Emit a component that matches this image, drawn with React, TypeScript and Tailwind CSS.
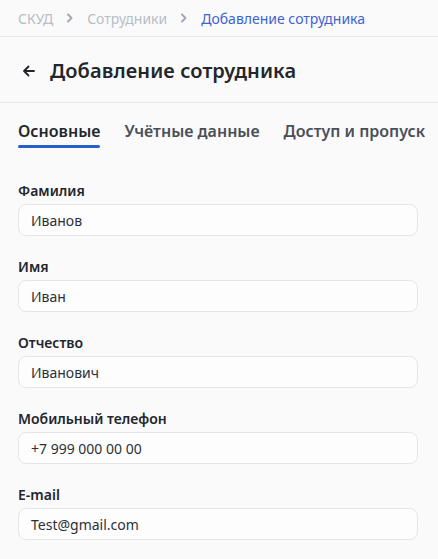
import React from 'react';

const fields = [
  { label: 'Фамилия', value: 'Иванов' },
  { label: 'Имя', value: 'Иван' },
  { label: 'Отчество', value: 'Иванович' },
  { label: 'Мобильный телефон', value: '+7 999 000 00 00' },
  { label: 'E-mail', value: 'Test@gmail.com' },
];

function Chevron() {
  return (
    <svg width="8" height="10" viewBox="0 0 8 10" fill="none" className="text-[#a3a8b0]">
      <path d="M2 1.5 5.5 5 2 8.5" stroke="currentColor" strokeWidth="2" strokeLinecap="round" strokeLinejoin="round" />
    </svg>
  );
}

export default function App() {
  return (
    <div className="min-h-screen bg-[#fafafb] text-[#23262b]" style={{ fontFamily: '"Noto Sans", "Open Sans", sans-serif' }}>
      {/* breadcrumbs */}
      <div className="flex items-center h-[37px] px-[18px] gap-[13px] text-[14px] border-b border-[#e6e7ea]">
        <span className="text-[#b9bdc4]">СКУД</span>
        <Chevron />
        <span className="text-[#b9bdc4]">Сотрудники</span>
        <Chevron />
        <span className="text-[#3f63d2]">Добавление сотрудника</span>
      </div>

      {/* header */}
      <div className="flex items-center h-[66px] pt-[2px] px-[22px] gap-[14px] border-b border-[#e6e7ea]">
        <svg width="14" height="14" viewBox="0 0 14 14" fill="none">
          <path d="M12 7H2.5M6.5 2.5 2 7l4.5 4.5" stroke="#23262b" strokeWidth="1.8" strokeLinecap="round" strokeLinejoin="round" />
        </svg>
        <h1 className="text-[20px] font-semibold tracking-[0.1px]">Добавление сотрудника</h1>
      </div>

      {/* tabs */}
      <div className="flex gap-[24px] px-[18px] pt-[16px] whitespace-nowrap">
        <div className="flex flex-col shrink-0">
          <span className="text-[16px] font-semibold leading-[24px] text-[#23262b]">Основные</span>
          <span className="mt-[2px] h-[3px] rounded-full bg-[#2a5fcb]" />
        </div>
        <span className="shrink-0 text-[16px] font-semibold leading-[24px] text-[#4a4f57]">Учётные данные</span>
        <span className="shrink-0 text-[16px] font-semibold leading-[24px] text-[#4a4f57]">Доступ и пропуск</span>
      </div>

      {/* form */}
      <div className="flex flex-col gap-[21px] px-[18px] pt-[33px]">
        {fields.map((f) => (
          <div key={f.label} className="flex flex-col gap-[3px]">
            <label className="text-[14px] font-semibold leading-[20px] text-[#23262b]">{f.label}</label>
            <div className="h-[32px] w-[400px] flex items-center px-[12px] rounded-[8px] border border-[#e3e5e9] bg-[#fdfdfe] text-[14px] text-[#2c3036]">
              {f.value}
            </div>
          </div>
        ))}
      </div>
    </div>
  );
}
